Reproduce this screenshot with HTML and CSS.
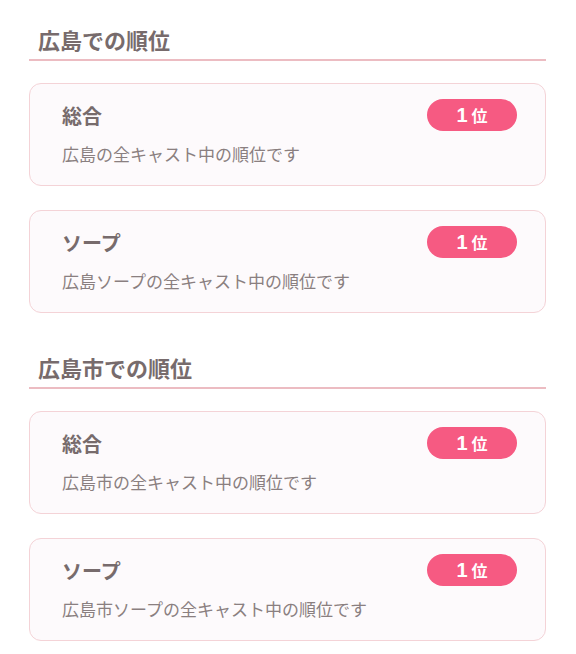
FILE: index.html
```html
<!DOCTYPE html>
<html lang="ja">
<head>
  <meta charset="UTF-8" />
  <meta name="viewport" content="width=device-width, initial-scale=1.0"/>
  <title>順位</title>
  <link rel="stylesheet" href="styles.css">
</head>
<body>
  <div class="container">
    <!-- 広島 -->
    <section class="rank-section">
      <h2 class="rank-heading">広島での順位</h2>
      <div class="rank-card">
        <div class="rank-info">
          <h3>総合</h3>
          <p>広島の全キャスト中の順位です</p>
        </div>
        <span class="rank-badge"><b>1</b>位</span>
      </div>
      <div class="rank-card">
        <div class="rank-info">
          <h3>ソープ</h3>
          <p>広島ソープの全キャスト中の順位です</p>
        </div>
        <span class="rank-badge"><b>1</b>位</span>
      </div>
    </section>

    <!-- 広島市 -->
    <section class="rank-section">
      <h2 class="rank-heading">広島市での順位</h2>
      <div class="rank-card">
        <div class="rank-info">
          <h3>総合</h3>
          <p>広島市の全キャスト中の順位です</p>
        </div>
        <span class="rank-badge"><b>1</b>位</span>
      </div>
      <div class="rank-card">
        <div class="rank-info">
          <h3>ソープ</h3>
          <p>広島市ソープの全キャスト中の順位です</p>
        </div>
        <span class="rank-badge"><b>1</b>位</span>
      </div>
    </section>
  </div>
</body>
</html>
```

FILE: styles.css
```css
* {
  margin: 0;
  padding: 0;
  box-sizing: border-box;
  font-family: "Noto Sans CJK JP", "Noto Sans", sans-serif;
}
body {
  background: #fff;
  color: #7a6e6e;
}
.container {
  padding: 24px 30px 0 29px;
}
.rank-section {
  margin-bottom: 39px;
}
.rank-heading {
  font-size: 22px;
  font-weight: bold;
  line-height: 30px;
  color: #776b6c;
  padding: 0 0 5px 9px;
  border-bottom: 2px solid #ecbcc2;
  margin-bottom: 22px;
}
.rank-card {
  display: flex;
  justify-content: space-between;
  align-items: flex-start;
  height: 103px;
  background: #fdfafc;
  border: 1.5px solid #f4d3d7;
  border-radius: 12px;
  padding: 15px 28px 0 32px;
  margin-bottom: 24px;
}
.rank-card:last-child {
  margin-bottom: 0;
}
.rank-info h3 {
  font-size: 20px;
  font-weight: bold;
  line-height: 24px;
  margin-top: 5px;
  color: #776b6c;
}
.rank-info p {
  font-size: 17px;
  line-height: 24px;
  margin-top: 14px;
  color: #8a7f80;
}
.rank-badge {
  display: flex;
  align-items: center;
  justify-content: center;
  gap: 4px;
  width: 90px;
  height: 32px;
  background: #f65a82;
  color: #fff;
  border-radius: 16px;
  font-size: 16px;
  font-weight: bold;
}
.rank-badge b {
  font-family: "Liberation Sans", sans-serif;
  font-size: 20px;
}
```
